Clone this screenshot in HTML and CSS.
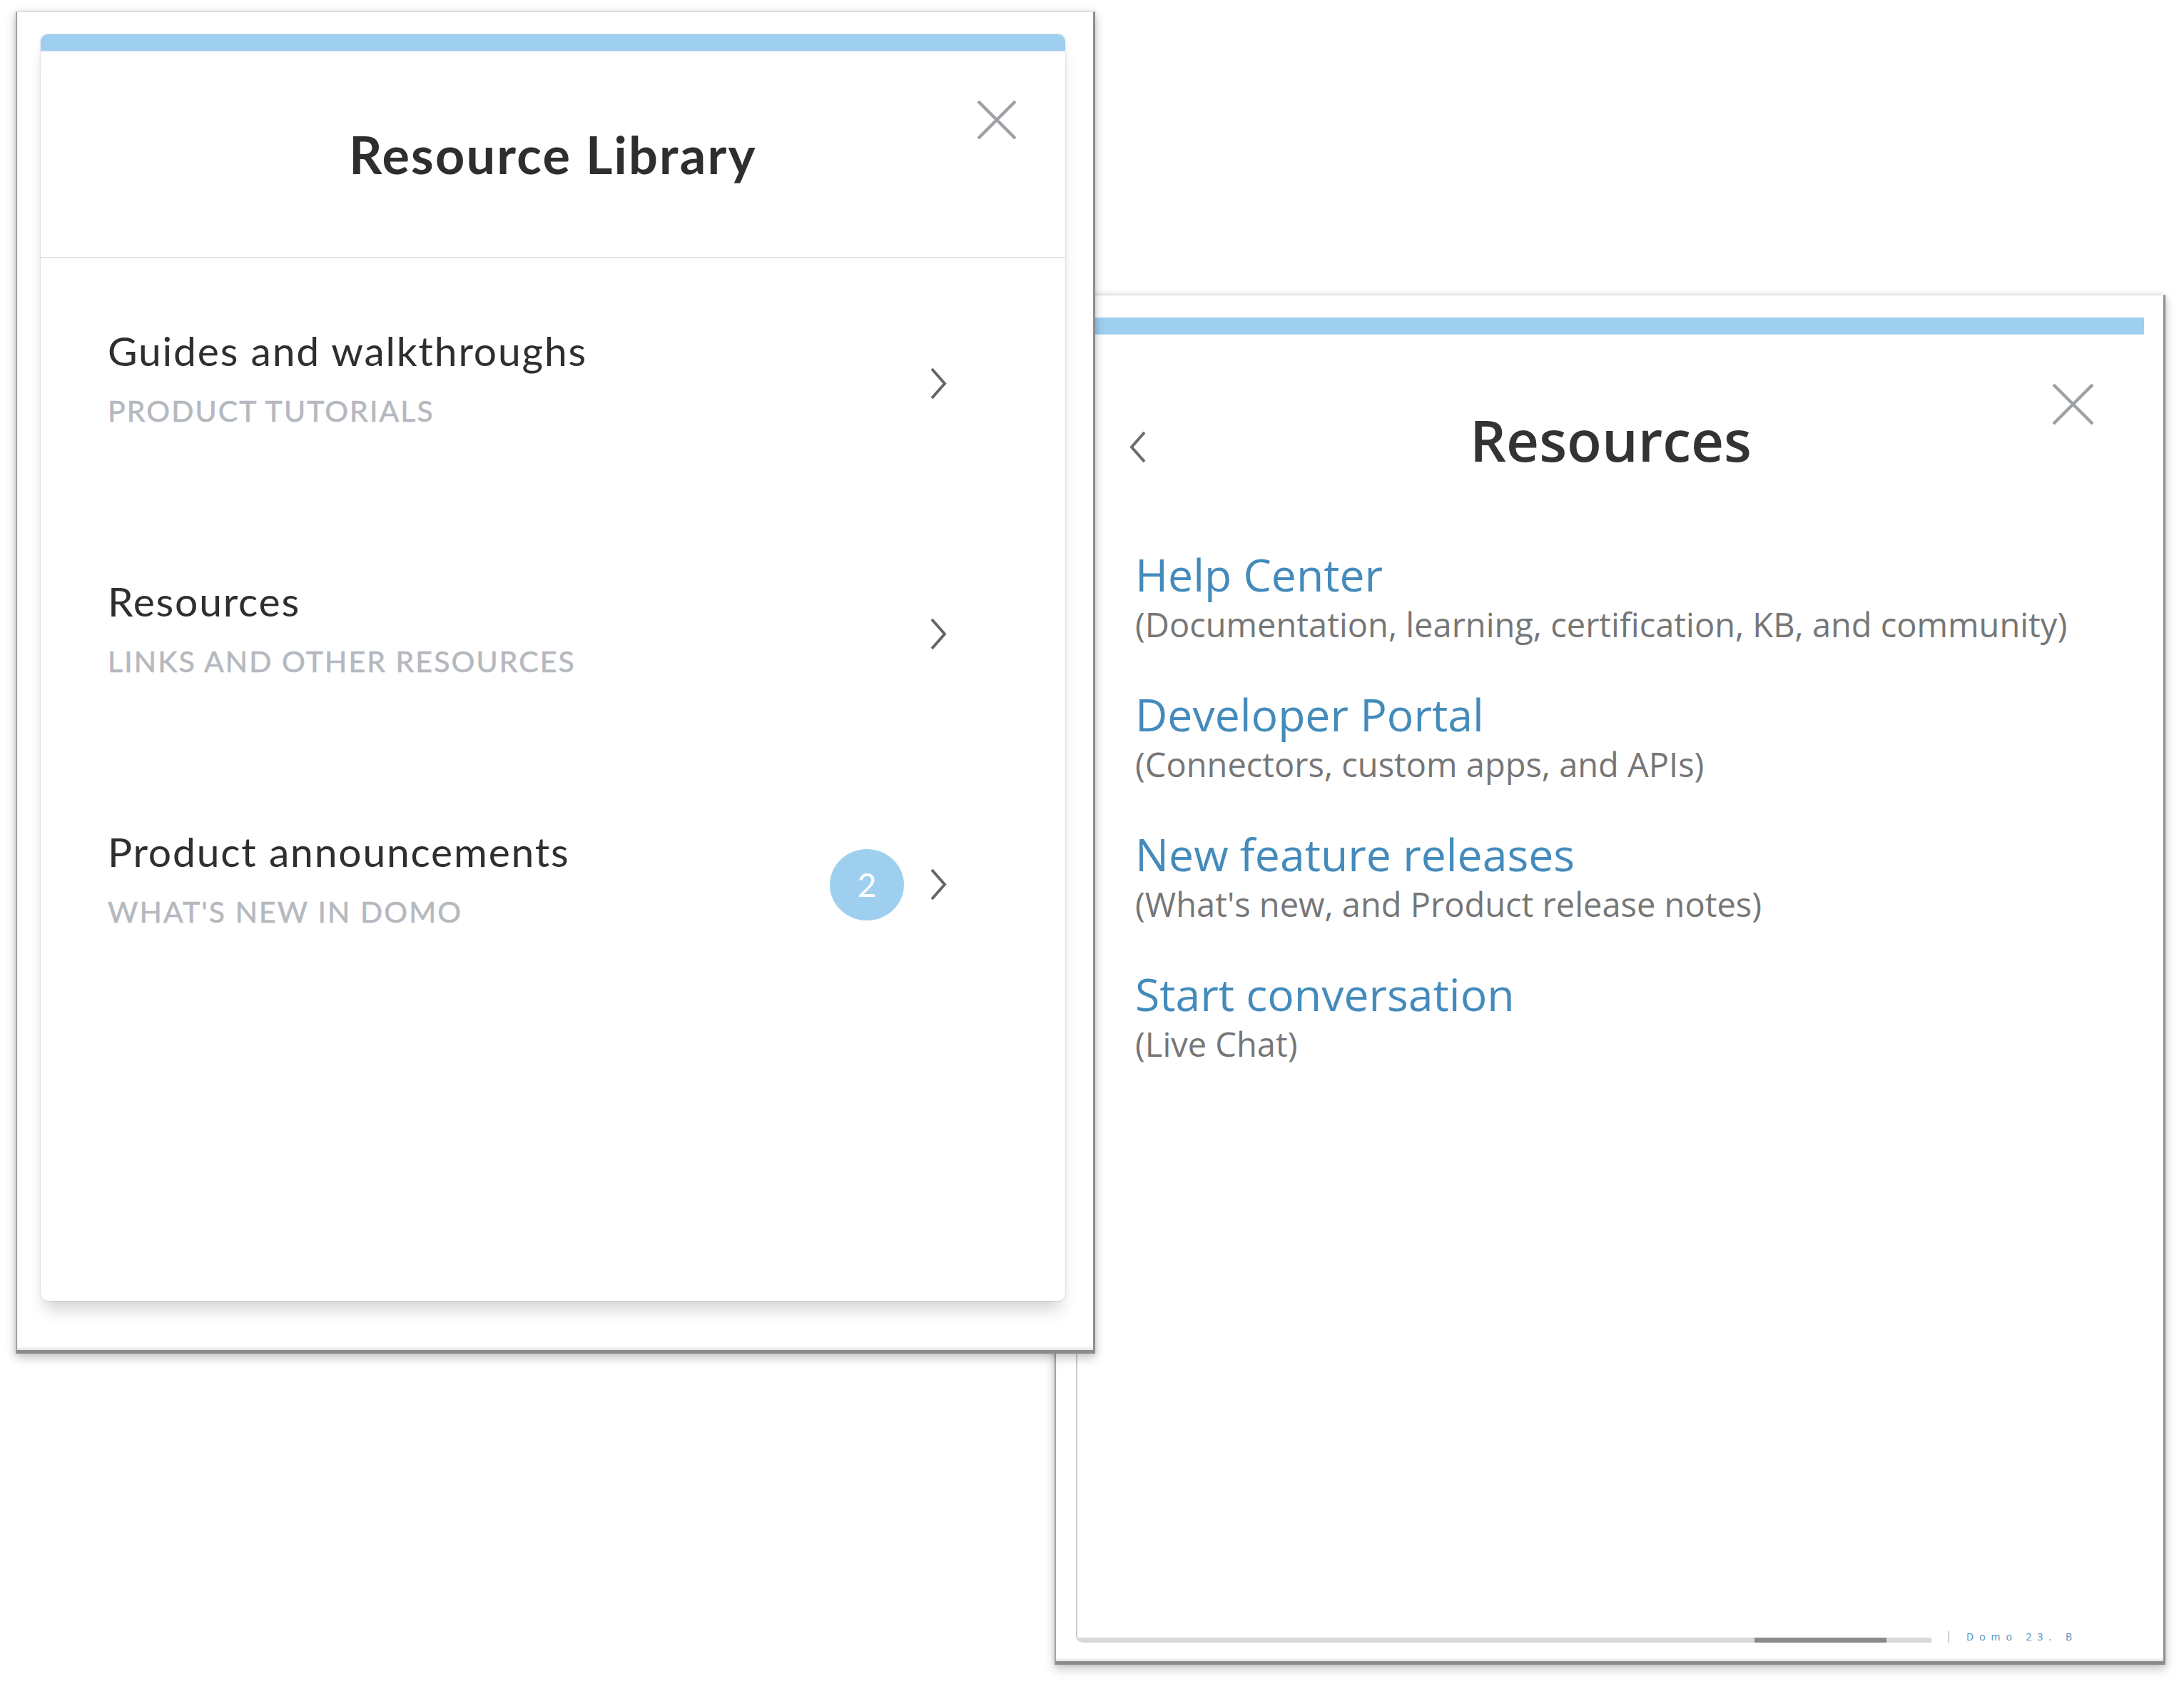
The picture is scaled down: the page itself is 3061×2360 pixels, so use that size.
FILE: index.html
```html
<!DOCTYPE html>
<html lang="en">
<head>
<meta charset="utf-8">
<title>Resource Library</title>
<link rel="stylesheet" href="styles.css">
</head>
<body>
<div class="desk">
  <section class="window window--resources">
    <div class="res-card">
      <div class="accent"></div>
      <header class="res-header">
        <button class="back" aria-label="Back">
          <svg viewBox="0 0 23 45" width="23" height="45"><polyline points="21,2 3,22.5 21,43" fill="none" stroke="#6b6b6b" stroke-width="4"/></svg>
        </button>
        <h1 class="res-title">Resources</h1>
        <button class="close close--res" aria-label="Close">
          <svg viewBox="0 0 61 61" width="61" height="61"><path d="M3 3 L58 58 M58 3 L3 58" stroke="#9da1a5" stroke-width="4.5" fill="none"/></svg>
        </button>
      </header>
      <ul class="res-list">
        <li class="res-item">
          <a class="res-link">Help Center</a>
          <p class="res-desc">(Documentation, learning, certification, KB, and community)</p>
        </li>
        <li class="res-item">
          <a class="res-link">Developer Portal</a>
          <p class="res-desc">(Connectors, custom apps, and APIs)</p>
        </li>
        <li class="res-item">
          <a class="res-link">New feature releases</a>
          <p class="res-desc">(What's new, and Product release notes)</p>
        </li>
        <li class="res-item">
          <a class="res-link">Start conversation</a>
          <p class="res-desc">(Live Chat)</p>
        </li>
      </ul>
      <div class="res-footer">
        <div class="track"><div class="thumb"></div></div>
        <div class="foot-text">Domo 23. B</div>
      </div>
    </div>
  </section>

  <section class="window window--library">
    <div class="lib-card">
      <div class="accent accent--round"></div>
      <header class="lib-header">
        <h1 class="lib-title">Resource Library</h1>
        <button class="close close--lib" aria-label="Close">
          <svg viewBox="0 0 58 58" width="58" height="58"><path d="M3 3 L55 55 M55 3 L3 55" stroke="#9da1a5" stroke-width="4.5" fill="none"/></svg>
        </button>
      </header>
      <ul class="lib-list">
        <li class="lib-row">
          <div class="lib-text">
            <div class="lib-name">Guides and walkthroughs</div>
            <div class="lib-sub">PRODUCT TUTORIALS</div>
          </div>
          <svg class="chev" viewBox="0 0 23 45" width="23" height="45"><polyline points="2,2 20,22.5 2,43" fill="none" stroke="#666" stroke-width="4"/></svg>
        </li>
        <li class="lib-row">
          <div class="lib-text">
            <div class="lib-name">Resources</div>
            <div class="lib-sub">LINKS AND OTHER RESOURCES</div>
          </div>
          <svg class="chev" viewBox="0 0 23 45" width="23" height="45"><polyline points="2,2 20,22.5 2,43" fill="none" stroke="#666" stroke-width="4"/></svg>
        </li>
        <li class="lib-row">
          <div class="lib-text">
            <div class="lib-name">Product announcements</div>
            <div class="lib-sub">WHAT'S NEW IN DOMO</div>
          </div>
          <span class="badge">2</span>
          <svg class="chev" viewBox="0 0 23 45" width="23" height="45"><polyline points="2,2 20,22.5 2,43" fill="none" stroke="#666" stroke-width="4"/></svg>
        </li>
      </ul>
    </div>
  </section>
</div>
</body>
</html>
```

FILE: styles.css
```css
html, body {
  margin: 0;
  padding: 0;
  background: #ffffff;
}

body {
  font-family: "Open Sans", "Noto Sans", sans-serif;
  color: #333;
}

.desk {
  position: relative;
  width: 3061px;
  height: 2360px;
  overflow: hidden;
  background: #ffffff;
}

/* ---------- window frames (screenshots on a canvas) ---------- */
.window {
  position: absolute;
  box-sizing: border-box;
  display: flex;
  flex-direction: column;
  background: #ffffff;
  border-top: 1px solid #d9d9d9;
  border-left: 2px solid #a3a3a3;
  border-right: 3px solid #8f8f8f;
  border-bottom: 5px solid #8b8b8b;
  box-shadow: inset 0 -3px 3px rgba(0, 0, 0, 0.10), 0 6px 14px rgba(0, 0, 0, 0.22), 0 0 7px rgba(0, 0, 0, 0.10);
}

.window--library {
  left: 22px;
  top: 16px;
  width: 1513px;
  height: 1881px;
  padding: 31px 39px 0 33px;
  z-index: 2;
}

.window--resources {
  left: 1478px;
  top: 413px;
  width: 1557px;
  height: 1920px;
  padding: 31px 27px 26px 30px;
  z-index: 1;
}

button {
  background: none;
  border: 0;
  padding: 0;
  margin: 0;
  cursor: pointer;
}

.close svg, .back svg {
  display: block;
}

.accent {
  height: 23px;
  background: #9ecfee;
  border-bottom: 1px solid #b7dbf2;
  flex: none;
}

.accent--round {
  border-radius: 10px 10px 0 0;
}

/* ---------- Resource Library card ---------- */
.lib-card {
  width: 1436px;
  height: 1775px;
  background: #ffffff;
  border-radius: 10px;
  box-shadow: 0 0 0 1px rgba(0, 0, 0, 0.03), 0 0 5px rgba(0, 0, 0, 0.09), 0 18px 22px -6px rgba(0, 0, 0, 0.17);
  font-family: "Lato", "Noto Sans", sans-serif;
}

.lib-header {
  position: relative;
  height: 288px;
  border-bottom: 2px solid #e2e5e9;
  display: flex;
  align-items: center;
  justify-content: center;
}

.lib-title {
  margin: 0;
  font-size: 72px;
  line-height: 85px;
  font-weight: 700;
  color: #2e2e2e;
  letter-spacing: 2.2px;
}

.close {
  position: absolute;
  top: 67px;
}

.close--lib {
  right: 67px;
}

.close--res {
  right: 69px;
}

.lib-list {
  list-style: none;
  margin: 0;
  padding: 0;
}

.lib-row {
  height: 351px;
  display: flex;
  align-items: center;
  padding: 0 166px 0 94px;
}

.lib-text {
  flex: 1;
  padding-bottom: 18px;
}

.lib-name {
  font-size: 57px;
  line-height: 56px;
  color: #2f2f2f;
  letter-spacing: 1.8px;
}

.lib-sub {
  margin-top: 37px;
  font-size: 41px;
  line-height: 39px;
  color: #b5b9bf;
  letter-spacing: 2.1px;
  -webkit-text-stroke: 0.6px #b5b9bf;
}

.badge {
  width: 104px;
  height: 100px;
  border-radius: 50%;
  background: #9ecfee;
  color: #ffffff;
  font-size: 46px;
  display: flex;
  align-items: center;
  justify-content: center;
  margin-right: 37px;
}

.chev {
  flex: none;
  display: block;
}

/* ---------- Resources card ---------- */
.res-card {
  flex: 1;
  display: flex;
  flex-direction: column;
  background: #ffffff;
  border-left: 2px solid #c9c9c9;
  border-radius: 0 0 4px 10px;
  margin-left: -2px;
  overflow: hidden;
}

.res-header {
  position: relative;
  padding-top: 97px;
  text-align: center;
}

.back {
  position: absolute;
  left: 73px;
  top: 135px;
}

.res-title {
  margin: 0;
  font-size: 80px;
  line-height: 100px;
  font-weight: 600;
  color: #333333;
}

.res-list {
  list-style: none;
  margin: 0;
  padding: 102px 0 0 81px;
  flex: 1;
}

.res-item {
  margin-bottom: 59px;
}

.res-link {
  display: block;
  font-size: 62.5px;
  line-height: 74px;
  color: #448bbc;
}

.res-desc {
  margin: 3px 0 0;
  font-size: 47px;
  line-height: 60px;
  color: #767676;
}

.res-footer {
  height: 18px;
  display: flex;
  align-items: flex-end;
}

.track {
  width: 1197px;
  height: 7px;
  background: #d8d8d8;
  position: relative;
}

.thumb {
  position: absolute;
  left: 949px;
  top: 0;
  width: 185px;
  height: 7px;
  background: #8a8a8a;
}

.foot-text {
  margin-left: 24px;
  border-left: 1px solid #999;
  padding-left: 24px;
  font-size: 14px;
  line-height: 16px;
  color: #4a8ec2;
  letter-spacing: 8px;
  white-space: nowrap;
}
```
